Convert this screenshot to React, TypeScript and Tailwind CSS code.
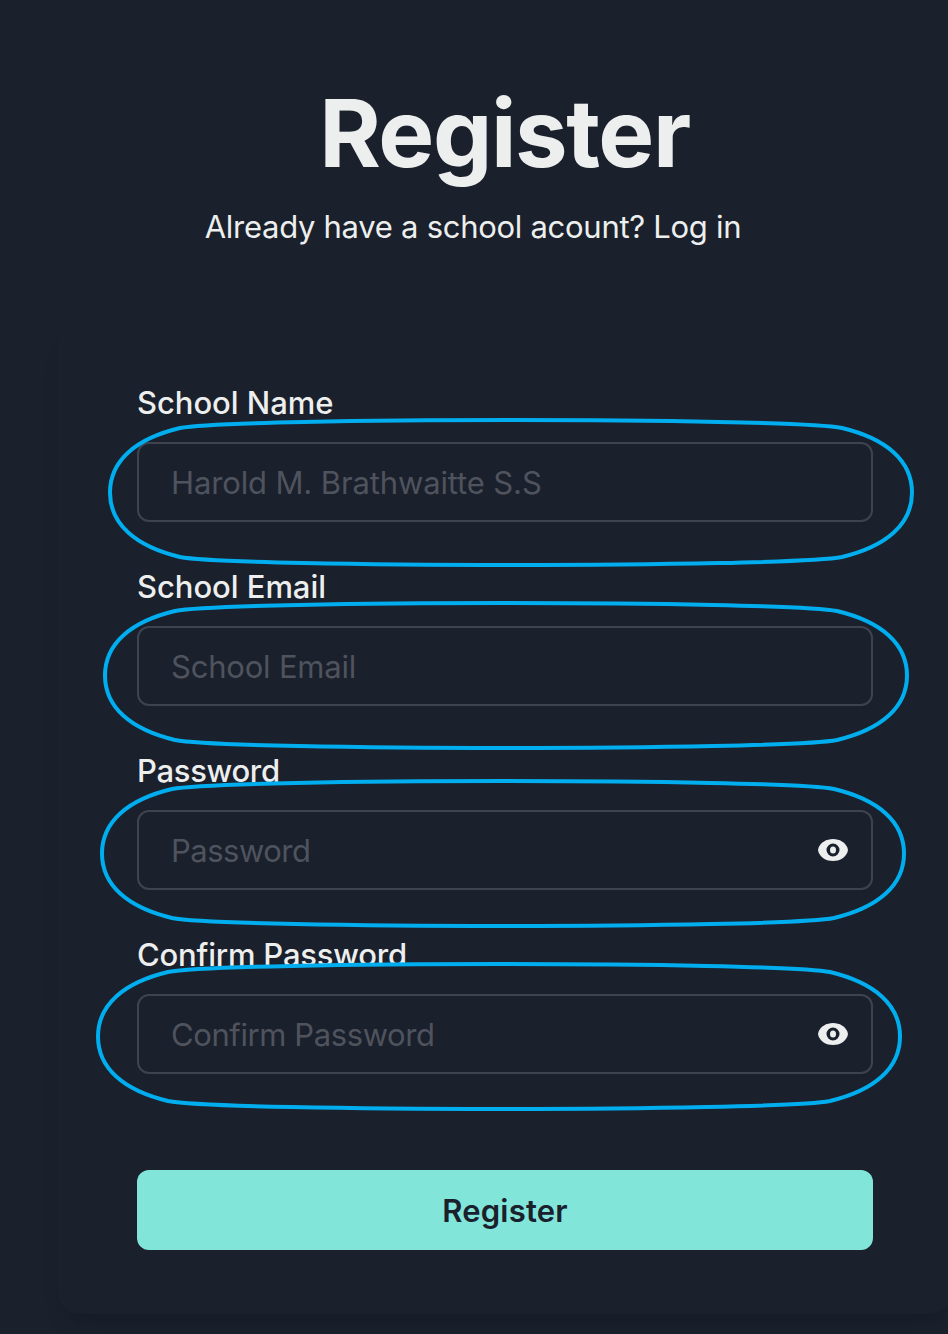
import React from "react";

type Field = { label: string; placeholder: string; labelClass: string; textClass: string; secret?: boolean };

const fields: Field[] = [
  { label: "School Name", placeholder: "Harold M. Brathwaitte S.S", labelClass: "tracking-[-0.05px]", textClass: "tracking-[-0.13px]" },
  { label: "School Email", placeholder: "School Email", labelClass: "tracking-[-0.05px]", textClass: "tracking-[-0.2px]" },
  { label: "Password", placeholder: "Password", labelClass: "tracking-[-0.3px]", textClass: "tracking-[-0.5px]", secret: true },
  { label: "Confirm Password", placeholder: "Confirm Password", labelClass: "tracking-[-0.2px]", textClass: "tracking-[-0.4px]", secret: true },
];

const marks = [
  [511, 492.5],
  [506, 675.5],
  [503, 853.5],
  [499, 1036.5],
];

const ring =
  "M-331-64.500C-303-70-140-72.500 0-72.500S303-70 331-64.500C375-54 401-32 401 0S375 54 331 64.500C303 70 140 72.500 0 72.500S-303 70-331 64.500C-375 54-401 32-401 0S-375-54-331-64.500Z";

function EyeIcon() {
  return (
    <svg viewBox="0 0 32 24" className="h-6 w-8" fill="#edefee">
      <path
        fillRule="evenodd"
        d="M16 1C9 1 4 4.500 1.600 9.500Q.5 12 1.600 14.500C4 19.500 9 23 16 23S28 19.500 30.400 14.500Q31.500 12 30.400 9.500C28 4.500 23 1 16 1ZM16 5.500A6.500 6.500 0 1 1 16 18.500A6.500 6.500 0 1 1 16 5.500Z"
      />
      <ellipse cx="16" cy="12" rx="3" ry="3.500" />
    </svg>
  );
}

export default function App() {
  return (
    <div className="relative h-[1334px] w-full overflow-hidden bg-[#1a202c] font-['Inter',sans-serif] text-[#edefee]">
      <div className="ml-[57px] flex h-[315px] w-[896px] flex-col items-center pt-[76px]">
        <h1 className="mr-px text-[94px] leading-[115px] font-bold tracking-[-1.4px]">Register</h1>
        <p className="mt-3 mr-[64px] text-[31px] leading-[48px] tracking-[-0.28px] whitespace-nowrap">
          Already have a school acount? Log in
        </p>
      </div>
      <form className="ml-[57px] w-[896px] rounded-[24px] bg-[#1a202c] px-20 py-16 shadow-[0_20px_30px_-14px_rgba(0,0,0,0.1),0_8px_12px_-6px_rgba(0,0,0,0.06)]">
        {fields.map((f) => (
          <div key={f.label} className="mb-4 flex h-[168px] flex-col">
            <label className={`mb-[15px] text-[31px] leading-[48px] font-medium ${f.labelClass}`}>{f.label}</label>
            <div className="flex h-20 items-center justify-between rounded-xl border-2 border-white/16 pr-[22px] pl-8">
              <span className={`pt-0.5 text-[31px] text-[#4f535d] ${f.textClass}`}>{f.placeholder}</span>
              {f.secret && <EyeIcon />}
            </div>
          </div>
        ))}
        <button className="mt-[71px] block h-20 w-full rounded-xl bg-[#81e6d9] pt-[3px] text-[31px] font-semibold tracking-[0.2px] text-[#1a202c]">
          Register
        </button>
      </form>
      <svg className="pointer-events-none absolute inset-0 h-[1334px] w-[948px]" fill="none" stroke="#00aeef" strokeWidth="4">
        {marks.map(([x, y]) => (
          <path key={y} d={ring} transform={`translate(${x} ${y})`} />
        ))}
      </svg>
    </div>
  );
}
